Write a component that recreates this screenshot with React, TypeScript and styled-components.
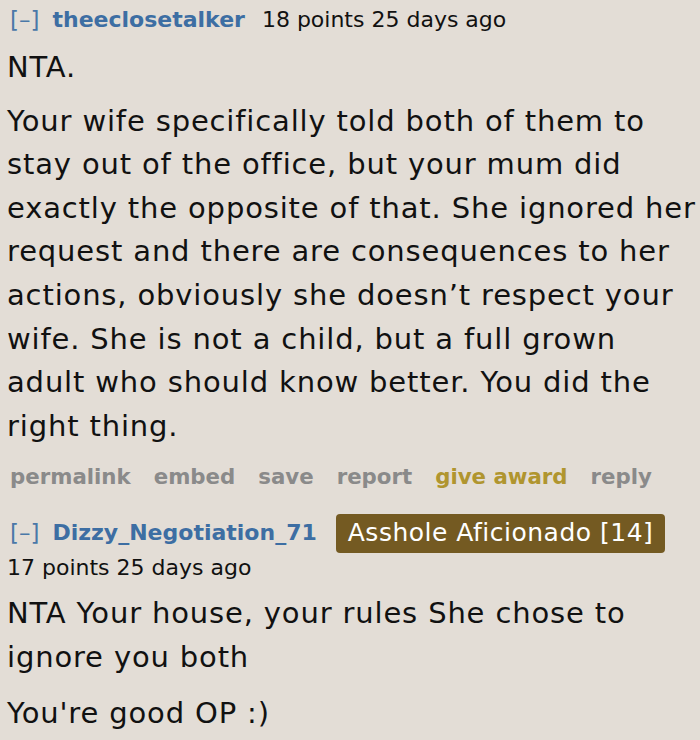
import React from 'react'
import styled, { createGlobalStyle } from 'styled-components'

const GlobalStyle = createGlobalStyle`
  body {
    margin: 0;
    background: #e3ddd6;
    font-family: 'DejaVu Sans', Verdana, sans-serif;
    color: #111;
  }
`

const Page = styled.div`
  width: 700px;
  height: 740px;
  overflow: hidden;
  padding: 5px 0 0 7px;
  box-sizing: border-box;
`

const Tagline = styled.div<{ $top?: number }>`
  display: flex;
  align-items: center;
  gap: 13px;
  height: 30px;
  margin-top: ${(p) => p.$top ?? 0}px;
  font-size: 22px;
  line-height: 30px;
  white-space: nowrap;
`

const Toggle = styled.span`
  color: #4a78a8;
  margin-left: 3px;
  font-size: 23px;
`

const Author = styled.span`
  color: #3d6ea3;
  font-weight: bold;
  margin-right: 4px;
`

const Meta = styled.span`
  color: #111;
`

const Flair = styled.span`
  background: #745a22;
  color: #fff;
  border-radius: 4px;
  padding: 4px 12px 5px 12px;
  font-size: 25px;
  letter-spacing: 0.5px;
  line-height: 30px;
  margin-left: 2px;
`

const Body = styled.div<{ $top: number; $gap: number }>`
  display: flex;
  flex-direction: column;
  gap: ${(p) => p.$gap}px;
  margin-top: ${(p) => p.$top}px;
  font-size: 29px;
  letter-spacing: 0.85px;
  line-height: 43.6px;
  white-space: nowrap;
  p {
    margin: 0;
  }
  span {
    display: block;
  }
`

const Actions = styled.ul`
  display: flex;
  gap: 23px;
  list-style: none;
  margin: 14px 0 0 3px;
  padding: 0;
  font-size: 21.3px;
  font-weight: bold;
  line-height: 30px;
`

const Action = styled.li<{ $gold?: boolean }>`
  color: ${(p) => (p.$gold ? '#b0952f' : '#8a8a8a')};
`

const actions = ['permalink', 'embed', 'save', 'report', 'give award', 'reply']

const firstLines = [
  'Your wife specifically told both of them to',
  'stay out of the office, but your mum did',
  'exactly the opposite of that. She ignored her',
  'request and there are consequences to her',
  'actions, obviously she doesn’t respect your',
  'wife. She is not a child, but a full grown',
  'adult who should know better. You did the',
  'right thing.',
]

export default function App() {
  return (
    <>
      <GlobalStyle />
      <Page>
        <Tagline>
          <Toggle>[–]</Toggle>
          <Author>theeclosetalker</Author>
          <Meta>18 points 25 days ago</Meta>
        </Tagline>
        <Body $top={11} $gap={10}>
          <p>NTA.</p>
          <p>
            {firstLines.map((l) => (
              <span key={l}>{l}</span>
            ))}
          </p>
        </Body>
        <Actions>
          {actions.map((a) => (
            <Action key={a} $gold={a === 'give award'}>
              {a}
            </Action>
          ))}
        </Actions>
        <Tagline $top={26}>
          <Toggle>[–]</Toggle>
          <Author>Dizzy_Negotiation_71</Author>
          <Flair>Asshole Aficionado [14]</Flair>
        </Tagline>
        <Tagline $top={5}>
          <Meta>17 points 25 days ago</Meta>
        </Tagline>
        <Body $top={9} $gap={12}>
          <p>
            <span>NTA Your house, your rules She chose to</span>
            <span>ignore you both</span>
          </p>
          <p>You're good OP :)</p>
        </Body>
      </Page>
    </>
  )
}
